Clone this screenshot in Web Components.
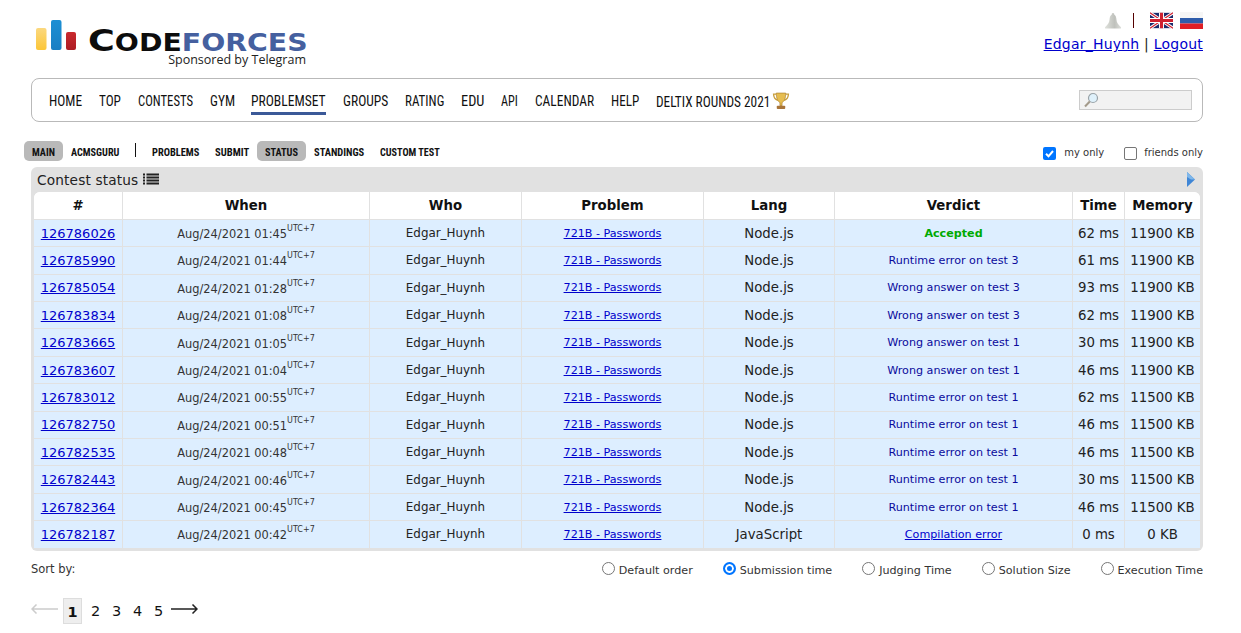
<!DOCTYPE html>
<html>
<head>
<meta charset="utf-8">
<title>Status - Codeforces</title>
<style>
  html, body { margin: 0; background: #fff; }
  body { font-family: "DejaVu Sans", Verdana, sans-serif; font-size: 13px; color: #222; }
  #page { display: block; padding: 0 38px 0 31px; }
</style>
</head>
<body>
<div id="page">
  <cf-header></cf-header>
  <cf-menu></cf-menu>
  <cf-tabs></cf-tabs>
  <cf-status></cf-status>
  <cf-sort></cf-sort>
  <cf-pages></cf-pages>
</div>

<script>
const NARROW = '"Liberation Sans Narrow", "Roboto Condensed", "Liberation Sans", sans-serif';

// the menu font of the original is narrower than anything installed, squeeze each label into its box
function fitLabels(root) {
  root.querySelectorAll('[data-w]').forEach(el => {
    const span = el.firstElementChild;
    span.style.transform = `scaleX(${el.dataset.w / span.offsetWidth})`;
  });
}

class CfHeader extends HTMLElement {
  constructor() {
    super();
    this.attachShadow({ mode: 'open' }).innerHTML = `
      <style>
        :host { display: flex; justify-content: space-between; height: 78px; box-sizing: border-box; }
        .logo { display: flex; flex-direction: column; padding: 20px 0 0 5px; width: 280px; }
        .mark { display: flex; align-items: flex-start; height: 31px; }
        .word { font-size: 0; margin: 8px 0 0 12px; white-space: nowrap; line-height: 24px; height: 24px; transform: scaleX(1.18); transform-origin: left center; }
        .word b { font-family: "DejaVu Sans", sans-serif; font-weight: 700; }
        .c1 { font-size: 31px; color: #0c0c0c; }
        .c2 { font-size: 24px; color: #0c0c0c; }
        .c3 { font-size: 24px; color: #45609f; }
        .sponsor { font-family: "Open Sans", sans-serif; font-size: 12.500px; line-height: 16px; color: #222; text-align: right; margin: 1px 10px 0 0; white-space: nowrap; }
        .user { display: flex; flex-direction: column; align-items: flex-end; padding-top: 11px; font-size: 14px; color: #222; }
        .icons { display: flex; align-items: center; height: 19px; }
        .sep { width: 1px; height: 15px; background: #500; margin: 0 16px 0 12px; }
        .icons svg { display: block; }
        .ru { margin-left: 7px; }
        .links { margin-top: 5px; line-height: 18px; letter-spacing: .22px; white-space: nowrap; }
        a { color: #00c; }
      </style>
      <div class="logo">
        <div class="mark">
          <svg width="40" height="31" viewBox="0 0 40 31">
            <defs>
              <linearGradient id="y" x1="0" y1="0" x2="0" y2="1"><stop offset="0" stop-color="#fbd87f"/><stop offset="1" stop-color="#fcc637"/></linearGradient>
              <linearGradient id="b" x1="0" y1="0" x2="0" y2="1"><stop offset="0" stop-color="#1c8fd4"/><stop offset="1" stop-color="#1a7fc3"/></linearGradient>
              <linearGradient id="r" x1="0" y1="0" x2="0" y2="1"><stop offset="0" stop-color="#c9292e"/><stop offset="1" stop-color="#ad1d24"/></linearGradient>
            </defs>
            <rect x="0" y="8" width="10.500" height="22" rx="2" fill="url(#y)"/>
            <rect x="15" y="0" width="10.500" height="30" rx="2" fill="url(#b)"/>
            <rect x="30" y="12" width="10" height="18" rx="2" fill="url(#r)"/>
          </svg>
          <div class="word"><b class="c1">C</b><b class="c2">ODE</b><b class="c3">FORCES</b></div>
        </div>
        <div class="sponsor">Sponsored by Telegram</div>
      </div>
      <div class="user">
        <div class="icons">
          <svg width="16" height="16" viewBox="0 0 16 16">
            <defs><linearGradient id="bell" x1="0" y1="0" x2="1" y2="0"><stop offset="0" stop-color="#e0e2dd"/><stop offset=".6" stop-color="#bfc1bc"/><stop offset="1" stop-color="#dcdeda"/></linearGradient></defs>
            <path d="M8 0c1 0 1.300.8 1.300 1.800 1.500.6 2 2.400 2.200 5 .2 2.700 1.500 5 4.500 7.400.3.8 0 1.300-.8 1.300H.8c-.8 0-1.100-.5-.8-1.300 3-2.400 4.300-4.700 4.500-7.400.2-2.600.7-4.400 2.200-5C6.700.8 7 0 8 0z" fill="url(#bell)"/>
          </svg>
          <span class="sep"></span>
          <svg width="23" height="17" viewBox="0 0 60 40"><rect width="60" height="40" fill="#1b2a6b"/><path d="M0 0L60 40M60 0L0 40" stroke="#fff" stroke-width="8"/><path d="M0 0L60 40M60 0L0 40" stroke="#cf2030" stroke-width="3"/><path d="M30 0V40M0 20H60" stroke="#fff" stroke-width="13"/><path d="M30 0V40M0 20H60" stroke="#cf2030" stroke-width="8"/></svg>
          <svg class="ru" width="23" height="17" viewBox="0 0 23 17"><rect width="23" height="6" fill="#f6f6f6"/><rect y="6" width="23" height="5.500" fill="#2f5dab"/><rect y="11.500" width="23" height="5.500" fill="#df1f26"/></svg>
        </div>
        <div class="links"><a href="#">Edgar_Huynh</a> | <a href="#">Logout</a></div>
      </div>`;
  }
}

class CfMenu extends HTMLElement {
  constructor() {
    super();
    const items = [['HOME', 33], ['TOP', 22], ['CONTESTS', 55], ['GYM', 25], ['PROBLEMSET', 75], ['GROUPS', 45], ['RATING', 39], ['EDU', 23], ['API', 17], ['CALENDAR', 59], ['HELP', 28]];
    this.attachShadow({ mode: 'open' }).innerHTML = `
      <style>
        :host { display: flex; align-items: center; height: 44px; box-sizing: border-box; border: 1px solid #b9b9b9; border-radius: 8px; padding: 0 10px 0 17px; }
        .items { display: flex; flex: 1; gap: 17px; padding-top: 5px; font-family: ${NARROW}; font-size: 15px; color: #111; }
        .item { height: 25px; line-height: 22px; box-sizing: border-box; white-space: nowrap; }
        .item span { display: inline-block; transform-origin: left center; }
        .item.on { border-bottom: 3px solid #3b5998; margin-left: -1px; }
        .deltix { display: flex; gap: 2px; font-size: 14.500px; }
        .deltix .item { line-height: 25px; }
        .deltix svg { margin-top: 2px; }
        .search { display: flex; align-items: center; width: 113px; height: 20px; box-sizing: border-box; border: 1px solid #ccc; background: #f2f2f2; padding-left: 3px; }
      </style>
      <div class="items">
        ${items.map(([t, w]) => `<div class="item${t === 'PROBLEMSET' ? ' on' : ''}" data-w="${w}" style="width:${w}px"><span>${t}</span></div>`).join('')}
        <div class="deltix">
          <div class="item" data-w="114" style="width:114px"><span>DELTIX ROUNDS 2021</span></div>
          <svg width="18" height="18" viewBox="0 0 17 17"><path d="M4 2H1.500c0 3 1 5 4 6M13 2h2.500c0 3-1 5-4 6" fill="none" stroke="#c9a040" stroke-width="1.300"/><path d="M4 1h9c0 5-1.500 8-3.500 9v3h-2v-3C5.500 9 4 6 4 1z" fill="#e6bd50" stroke="#a87c28" stroke-width=".6"/><rect x="4.500" y="13" width="8" height="3" rx=".8" fill="#a8743a"/></svg>
        </div>
      </div>
      <div class="search">
        <svg width="16" height="16" viewBox="0 0 16 16"><circle cx="10" cy="6" r="4.500" fill="#dff1fb" stroke="#9aa3a8" stroke-width="1.200"/><path d="M6.800 9.500L2 14.500" stroke="#a39a8a" stroke-width="2"/></svg>
      </div>`;
  }

  connectedCallback() {
    fitLabels(this.shadowRoot);
  }
}

class CfTabs extends HTMLElement {
  constructor() {
    super();
    const left = [['MAIN', 23, true], ['ACMSGURU', 48], null, ['PROBLEMS', 47], ['SUBMIT', 34], ['STATUS', 33, true], ['STANDINGS', 50], ['CUSTOM TEST', 60]];
    this.attachShadow({ mode: 'open' }).innerHTML = `
      <style>
        :host { display: flex; align-items: center; justify-content: space-between; height: 45px; box-sizing: border-box; margin-left: -7px; }
        .tabs { display: flex; align-items: center; margin-top: 13px; font-family: ${NARROW}; font-size: 11.500px; font-weight: 700; color: #111; }
        .tab { height: 20px; line-height: 22px; padding: 0 8px; border-radius: 5px; white-space: nowrap; }
        .tab > div { height: 20px; }
        .tab span { display: inline-block; transform-origin: left center; }
        .tab.on { background: #b9b9b9; }
        .bar { width: 1px; height: 14px; background: #111; margin: 0 8px 3px 8px; }
        .checks { display: flex; align-items: center; gap: 20px; margin-top: 15px; font-size: 10px; color: #333; }
        label { display: flex; align-items: center; gap: 7px; }
        label:first-child { gap: 8px; }
        .box { width: 13px; height: 13px; box-sizing: border-box; border-radius: 2px; border: 1px solid #767676; background: #fff; display: block; margin-top: 2px; }
        .box.on { border: 0; background: #0075ff; }
      </style>
      <div class="tabs">
        ${left.map(t => t ? `<div class="tab${t[2] ? ' on' : ''}"><div data-w="${t[1]}" style="width:${t[1]}px"><span>${t[0]}</span></div></div>` : '<div class="bar"></div>').join('')}
      </div>
      <div class="checks">
        <label><svg class="box on" viewBox="0 0 13 13"><path d="M3 6.800l2.500 2.500L10 4" fill="none" stroke="#fff" stroke-width="2"/></svg>my only</label>
        <label><span class="box"></span>friends only</label>
      </div>`;
  }

  connectedCallback() {
    fitLabels(this.shadowRoot);
  }
}

const ROWS = [
  ['126786026', '01:45', 'Accepted', '62 ms', '11900 KB'],
  ['126785990', '01:44', 'Runtime error on test 3', '61 ms', '11900 KB'],
  ['126785054', '01:28', 'Wrong answer on test 3', '93 ms', '11900 KB'],
  ['126783834', '01:08', 'Wrong answer on test 3', '62 ms', '11900 KB'],
  ['126783665', '01:05', 'Wrong answer on test 1', '30 ms', '11900 KB'],
  ['126783607', '01:04', 'Wrong answer on test 1', '46 ms', '11900 KB'],
  ['126783012', '00:55', 'Runtime error on test 1', '62 ms', '11500 KB'],
  ['126782750', '00:51', 'Runtime error on test 1', '46 ms', '11500 KB'],
  ['126782535', '00:48', 'Runtime error on test 1', '46 ms', '11500 KB'],
  ['126782443', '00:46', 'Runtime error on test 1', '30 ms', '11500 KB'],
  ['126782364', '00:45', 'Runtime error on test 1', '46 ms', '11500 KB'],
  ['126782187', '00:42', 'Compilation error', '0 ms', '0 KB']
];

class CfStatus extends HTMLElement {
  constructor() {
    super();
    this.attachShadow({ mode: 'open' }).innerHTML = `
      <style>
        :host { display: block; background: #e1e1e1; border-radius: 6px; padding: 0 3px 3px; }
        .title { display: flex; align-items: center; justify-content: space-between; height: 25px; padding: 0 5px 0 3px; font-size: 13.700px; color: #222; letter-spacing: .15px; }
        .title span { display: flex; align-items: center; gap: 5px; }
        .grid { display: grid; grid-template-columns: 88px 247px 152px 182px 131px 238px 52px 76px; background: #fff; border-radius: 6px 6px 0 0; overflow: hidden; }
        .grid > div { display: flex; align-items: center; justify-content: center; box-sizing: border-box; border-left: 1px solid #e1e1e1; border-top: 1px solid #e1e1e1; height: 27.420px; background: #ddeeff; font-size: 13.300px; white-space: nowrap; color: #222; }
        .grid > div.h { background: #fff; font-weight: 700; height: 26.800px; border-top: 0; color: #111; }
        .grid > div.first { border-left: 0; font-size: 13px; }
        .grid > div.h.first { font-size: 13.300px; }
        .grid > div.when { font-size: 11.400px; padding-top: 2px; color: #333; }
        .grid > div.who { font-size: 11.900px; }
        a { color: #00c; }
        .small { font-size: 11.150px; }
        sup { font-size: 8px; line-height: 0; position: relative; top: -5px; vertical-align: baseline; }
        .verdict { color: #0a0a9c; }
        .ok { color: #0a0; font-weight: 700; }
      </style>
      <div class="title">
        <span>Contest status
          <svg width="16" height="13" viewBox="0 0 16 13"><path d="M0 1.500h2M3.500 1.500H16M0 4.500h2M3.500 4.500H16M0 7.500h2M3.500 7.500H16M0 10.500h2M3.500 10.500H16" stroke="#222" stroke-width="2"/></svg>
        </span>
        <svg width="8" height="15" viewBox="0 0 8 15"><path d="M0 0L8 7.500L0 15z" fill="#3f86d6"/><path d="M0 0L8 7.500H4L0 5z" fill="#7fb7ea"/></svg>
      </div>
      <div class="grid">
        ${['#', 'When', 'Who', 'Problem', 'Lang', 'Verdict', 'Time', 'Memory'].map((h, i) => `<div class="h${i ? '' : ' first'}">${h}</div>`).join('')}
        ${ROWS.map(r => this.row(r)).join('')}
      </div>`;
  }

  row([id, time, verdict, ms, kb]) {
    let v = `<span class="small verdict">${verdict}</span>`;
    if (verdict === 'Accepted') v = `<span class="small ok">${verdict}</span>`;
    if (verdict === 'Compilation error') v = `<a class="small" href="#">${verdict}</a>`;
    return `
      <div class="first"><a href="#">${id}</a></div>
      <div class="when">Aug/24/2021 ${time}<sup>UTC+7</sup></div>
      <div class="who">Edgar_Huynh</div>
      <div><a class="small" href="#">721B - Passwords</a></div>
      <div>${verdict === 'Compilation error' ? 'JavaScript' : 'Node.js'}</div>
      <div>${v}</div>
      <div>${ms}</div>
      <div>${kb}</div>`;
  }
}

class CfSort extends HTMLElement {
  constructor() {
    super();
    const opts = ['Default order', 'Submission time', 'Judging Time', 'Solution Size', 'Execution Time'];
    this.attachShadow({ mode: 'open' }).innerHTML = `
      <style>
        :host { display: flex; justify-content: space-between; align-items: center; height: 40px; font-size: 11.150px; color: #333; }
        .by { font-size: 11.500px; margin-top: -3px; }
        .opts { display: flex; gap: 30px; }
        label { display: flex; align-items: center; gap: 4px; white-space: nowrap; }
        i { display: block; width: 13px; height: 13px; box-sizing: border-box; border: 1px solid #767676; border-radius: 50%; background: #fff; margin-top: -5px; }
        i.on { border: 2px solid #0075ff; box-shadow: inset 0 0 0 2px #fff; background: #0075ff; }
      </style>
      <div class="by">Sort by:</div>
      <div class="opts">
        ${opts.map(o => `<label><i${o === 'Submission time' ? ' class="on"' : ''}></i>${o}</label>`).join('')}
      </div>`;
  }
}

class CfPages extends HTMLElement {
  constructor() {
    super();
    this.attachShadow({ mode: 'open' }).innerHTML = `
      <style>
        :host { display: flex; align-items: center; height: 26px; margin-top: 7px; font-size: 14.500px; color: #111; }
        .cur { width: 19px; height: 26px; line-height: 26px; box-sizing: border-box; border: 1px solid #ddd; background: #eee; text-align: center; font-weight: 700; margin: 0 3px 0 5px; }
        .n { width: 21px; text-align: center; }
        svg { display: block; margin-top: -3px; }
      </style>
      <svg width="27" height="10" viewBox="0 0 27 10"><path d="M27 5H1M5.500 .5L1 5l4.500 4.500" fill="none" stroke="#ccc" stroke-width="1.500"/></svg>
      <div class="cur">1</div>
      <div class="n">2</div><div class="n">3</div><div class="n">4</div><div class="n">5</div>
      <svg style="margin-left:2px" width="27" height="10" viewBox="0 0 27 10"><path d="M0 5h26M21.500 .5L26 5l-4.500 4.500" fill="none" stroke="#222" stroke-width="1.500"/></svg>`;
  }
}

customElements.define('cf-header', CfHeader);
customElements.define('cf-menu', CfMenu);
customElements.define('cf-tabs', CfTabs);
customElements.define('cf-status', CfStatus);
customElements.define('cf-sort', CfSort);
customElements.define('cf-pages', CfPages);
</script>
</body>
</html>
